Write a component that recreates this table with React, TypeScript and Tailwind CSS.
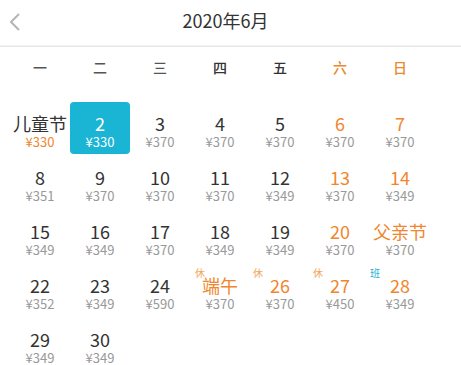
import React from "react";

type Day = {
  label: string;
  price: string;
  labelColor?: string;
  priceColor?: string;
  selected?: boolean;
  tag?: string;
  tagColor?: string;
  tagLeft?: string;
};

const DARK = "text-[#333333]";
const GRAY = "text-[#999999]";
const ORANGE = "text-[#f0862e]";

const rows: (Day | null)[][] = [
  [
    { label: "儿童节", price: "¥330", priceColor: ORANGE },
    { label: "2", price: "¥330", selected: true },
    { label: "3", price: "¥370" },
    { label: "4", price: "¥370" },
    { label: "5", price: "¥370" },
    { label: "6", price: "¥370", labelColor: ORANGE },
    { label: "7", price: "¥370", labelColor: ORANGE },
  ],
  [
    { label: "8", price: "¥351" },
    { label: "9", price: "¥370" },
    { label: "10", price: "¥370" },
    { label: "11", price: "¥370" },
    { label: "12", price: "¥349" },
    { label: "13", price: "¥370", labelColor: ORANGE },
    { label: "14", price: "¥349", labelColor: ORANGE },
  ],
  [
    { label: "15", price: "¥349" },
    { label: "16", price: "¥349" },
    { label: "17", price: "¥370" },
    { label: "18", price: "¥349" },
    { label: "19", price: "¥349" },
    { label: "20", price: "¥370", labelColor: ORANGE },
    { label: "父亲节", price: "¥370", labelColor: ORANGE },
  ],
  [
    { label: "22", price: "¥352" },
    { label: "23", price: "¥349" },
    { label: "24", price: "¥590" },
    { label: "端午", price: "¥370", labelColor: ORANGE, tag: "休", tagColor: "text-[#f2a660]", tagLeft: "left-[5px]" },
    { label: "26", price: "¥370", labelColor: ORANGE, tag: "休", tagColor: "text-[#f2a660]", tagLeft: "left-[3px]" },
    { label: "27", price: "¥450", labelColor: ORANGE, tag: "休", tagColor: "text-[#f2a660]", tagLeft: "left-[3px]" },
    { label: "28", price: "¥349", labelColor: ORANGE, tag: "班", tagColor: "text-[#1fb0cf]", tagLeft: "left-[0px]" },
  ],
  [
    { label: "29", price: "¥349" },
    { label: "30", price: "¥349" },
    null,
    null,
    null,
    null,
    null,
  ],
];

const weekdays = [
  { t: "一", c: "text-[#555555]" },
  { t: "二", c: "text-[#555555]" },
  { t: "三", c: "text-[#555555]" },
  { t: "四", c: "text-[#333333]" },
  { t: "五", c: "text-[#333333]" },
  { t: "六", c: "text-[#e8892c]" },
  { t: "日", c: "text-[#e8892c]" },
];

function Cell({ d }: { d: Day | null }) {
  if (!d) return <div className="h-[52px]" />;
  const sel = d.selected;
  return (
    <div
      className={`relative h-[52px] flex flex-col items-center pt-[10px] rounded-[4px] ${
        sel ? "bg-[#1ab4d4]" : ""
      }`}
    >
      {d.tag && (
        <span
          className={`absolute top-[3px] ${d.tagLeft} text-[10px] leading-[12px] ${d.tagColor}`}
        >
          {d.tag}
        </span>
      )}
      <span
        className={`text-[18px] leading-[22px] ${
          sel ? "text-white" : d.labelColor ?? DARK
        }`}
      >
        {d.label}
      </span>
      <span
        className={`text-[13px] leading-[16px] ${
          sel ? "text-white" : d.priceColor ?? GRAY
        }`}
      >
        {d.price}
      </span>
    </div>
  );
}

export default function App() {
  return (
    <div
      className="w-[461px] h-[365px] overflow-hidden bg-white"
      style={{ fontFamily: '"Noto Sans CJK SC", "Noto Sans", sans-serif' }}
    >
      <div className="relative h-[47px] flex items-center justify-center border-b border-[#e6e6e6] shadow-[0_-6px_0_-5px_#f2f2f2_inset]">
        <svg
          className="absolute left-[8px] top-[12px]"
          width="14"
          height="20"
          viewBox="0 0 14 20"
          fill="none"
        >
          <path d="M11 2 L3 10 L11 18" stroke="#b5b5b5" strokeWidth="2" />
        </svg>
        <span className="text-[18px] leading-[24px] text-[#333333] -ml-[10px] -mt-[7px]">
          2020年6月
        </span>
      </div>
      <div className="pl-[10px]">
        <div className="grid grid-cols-[repeat(7,60px)] h-[41px] items-center">
          {weekdays.map((w) => (
            <div key={w.t} className={`text-center text-[14px] font-medium ${w.c}`}>
              {w.t}
            </div>
          ))}
        </div>
        <div className="grid grid-cols-[repeat(7,60px)] gap-y-[2px] pt-[14px]">
          {rows.flat().map((d, i) => (
            <Cell key={i} d={d} />
          ))}
        </div>
      </div>
    </div>
  );
}
